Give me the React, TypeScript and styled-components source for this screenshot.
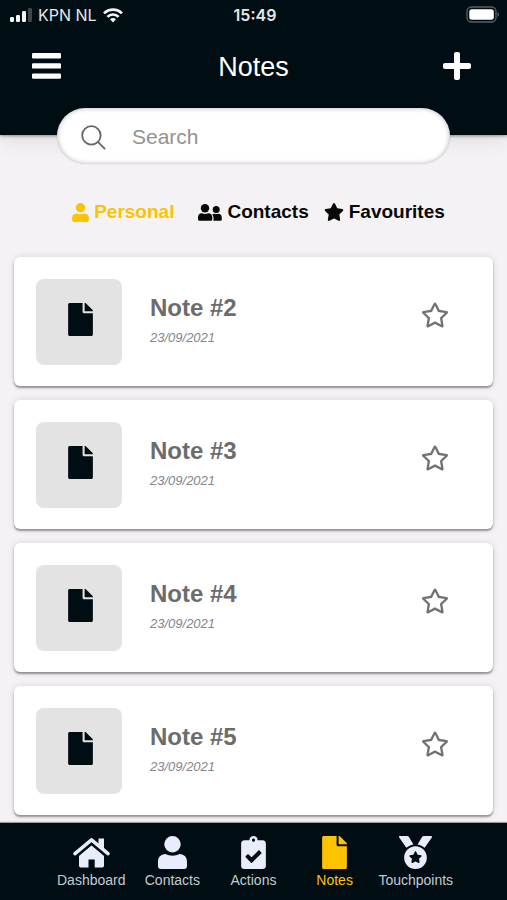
import React, { useState } from "react";
import styled, { createGlobalStyle, css } from "styled-components";
import { FaClipboardCheck, FaFile, FaMedal, FaPlus, FaRegStar, FaStar } from "react-icons/fa";

const color = {
  ink: "#000e14",
  page: "#f4f2f4",
  accent: "#fdc300",
  navIcon: "#e9edfb",
  navText: "#c3cbd0",
  grey: "#6c6c6c",
};

const GlobalStyle = createGlobalStyle`
  *, *::before, *::after { box-sizing: border-box; }
  body {
    margin: 0;
    background: ${color.page};
    font-family: "Liberation Sans", Arial, Helvetica, sans-serif;
  }
  svg { display: block; flex-shrink: 0; }
`;

const Page = styled.div`
  display: flex;
  flex-direction: column;
  min-height: 100vh;
`;

const Header = styled.header`
  height: 135px;
  background: ${color.ink};
  color: #fff;
  box-shadow: 0 1px 3px rgba(0, 0, 0, 0.4), 0 4px 20px rgba(0, 0, 0, 0.1);
`;

const StatusBar = styled.div`
  display: grid;
  grid-template-columns: 1fr auto 1fr;
  align-items: center;
  height: 30px;
  padding: 0 7px 0 10px;
  font: 400 16px/20px Inter, "Liberation Sans", sans-serif;
  color: #e4e8ea;
`;

const Carrier = styled.div`
  display: flex;
  align-items: center;
  gap: 6px;
`;

const Clock = styled.time`
  font-weight: 600;
`;

const Battery = styled.div`
  display: flex;
  justify-content: flex-end;
  padding-bottom: 2px;
`;

const TitleBar = styled.div`
  display: grid;
  grid-template-columns: 30px 1fr 30px;
  align-items: center;
  height: 72px;
  padding: 0 35px 0 31px;
`;

const Title = styled.h1`
  margin: 0;
  padding: 2px 0 0 4px;
  font-size: 27px;
  line-height: 32px;
  font-weight: 400;
  text-align: center;
`;

const plainButton = css`
  display: flex;
  align-items: center;
  justify-content: center;
  padding: 0;
  border: 0;
  background: none;
  color: inherit;
  font-family: inherit;
  cursor: pointer;
`;

const IconButton = styled.button`
  ${plainButton}
  height: 36px;
`;

const Main = styled.main`
  flex: 1;
  padding: 0 14px 8px;
`;

const SearchBox = styled.label`
  position: relative;
  display: flex;
  align-items: center;
  gap: 26px;
  height: 56px;
  margin: -27px 43px 0;
  padding: 2px 24px 0;
  border-radius: 28px;
  background: #fff;
  color: #666;
  box-shadow: inset 0 0 5px rgba(0, 0, 0, 0.3), 0 0 2px rgba(0, 0, 0, 0.1);
`;

const SearchInput = styled.input`
  flex: 1;
  min-width: 0;
  padding: 0;
  border: 0;
  outline: 0;
  background: none;
  color: #444;
  font: 400 21px/28px "Liberation Sans", Arial, sans-serif;
  &::placeholder {
    color: #929292;
    opacity: 1;
  }
`;

const Tabs = styled.div`
  display: flex;
  justify-content: center;
  margin: 34px 0 31px;
  padding-left: 10px;
`;

const Tab = styled.button<{ $active: boolean }>`
  ${plainButton}
  gap: 5px;
  height: 28px;
  color: ${(p) => (p.$active ? color.accent : "#080808")};
  font-size: 19px;
  line-height: 28px;
  font-weight: 700;
  & + & { margin-left: 15px; }
  &:first-child { margin-right: 9px; }
`;

const NoteList = styled.ul`
  display: grid;
  gap: 14px;
  margin: 0;
  padding: 0;
  list-style: none;
`;

const NoteCard = styled.li`
  display: flex;
  align-items: center;
  height: 129px;
  padding: 0 44px 0 22px;
  border-radius: 6px;
  background: #fff;
  box-shadow: 0 2px 2px rgba(0, 0, 0, 0.36), 0 0 7px rgba(0, 0, 0, 0.12);
`;

const Thumb = styled.div`
  display: grid;
  place-items: center;
  width: 86px;
  height: 86px;
  padding: 0 0 5px 3px;
  border-radius: 8px;
  background: #e3e3e3;
  color: ${color.ink};
`;

const NoteText = styled.div`
  flex: 1;
  height: 64px;
  margin-left: 28px;
`;

const NoteTitle = styled.h2`
  margin: 0;
  color: ${color.grey};
  font-size: 24px;
  line-height: 36px;
  font-weight: 700;
`;

const NoteDate = styled.time`
  display: block;
  color: #85858a;
  font-size: 13px;
  line-height: 24px;
  font-style: italic;
`;

const StarButton = styled.button`
  ${plainButton}
  height: 28px;
  margin-bottom: 14px;
  color: #727272;
`;

const BottomNav = styled.nav`
  position: sticky;
  bottom: 0;
  display: grid;
  grid-template-columns: repeat(5, 1fr);
  height: 77px;
  padding: 12px 10% 0;
  background: ${color.ink};
  box-shadow: 0 -1px 1px rgba(0, 0, 0, 0.35);
`;

const NavLink = styled.a<{ $active: boolean }>`
  display: flex;
  flex-direction: column;
  align-items: center;
  color: ${(p) => (p.$active ? color.accent : color.navText)};
  font-size: 14px;
  line-height: 20px;
  text-decoration: none;
  svg { color: ${(p) => (p.$active ? color.accent : color.navIcon)}; }
`;

const NavIcon = styled.span`
  display: flex;
  align-items: center;
  height: 35px;
`;

const SignalIcon = () => (
  <svg width="22" height="14" viewBox="0 0 22 14" fill="#f4f6f7" aria-hidden="true">
    <rect y="9" width="4" height="5" rx="1.2" />
    <rect x="6" y="7" width="4" height="7" rx="1.2" />
    <rect x="12" y="3" width="4" height="11" rx="1.2" />
    <rect x="18" y="0" width="4" height="14" rx="1.2" opacity=".25" />
  </svg>
);

const WifiIcon = () => (
  <svg width="20" height="15" viewBox="0 0 20 15" fill="none" stroke="#f4f6f7" strokeWidth="2.7" aria-hidden="true">
    <path d="M1 5.4C6 .4 14 .4 19 5.4" />
    <path d="M4.4 8.9c3.2-3.2 8-3.2 11.2 0" />
    <path d="M7 11.2c1.700-1.600 4.300-1.600 6 0L10 14.500z" fill="#f4f6f7" stroke="none" />
  </svg>
);

const BatteryIcon = () => (
  <svg width="34" height="17" viewBox="0 0 34 17" aria-hidden="true">
    <rect x="1" y="1" width="29" height="15" rx="4.5" fill="none" stroke="#566065" strokeWidth="1.3" />
    <rect x="3.3" y="3.2" width="24.5" height="10.6" rx="2.5" fill="#fff" />
    <path d="M31.5 6v5c2-.8 2-4.200 0-5z" fill="#566065" />
  </svg>
);

const MenuIcon = () => (
  <svg width="29" height="26" viewBox="0 0 29 26" fill="currentColor" aria-hidden="true">
    <rect width="29" height="5.400" rx="1.200" />
    <rect y="10.200" width="29" height="5.400" rx="1.200" />
    <rect y="20.400" width="29" height="5.400" rx="1.200" />
  </svg>
);

const SearchIcon = () => (
  <svg width="25" height="25" viewBox="0 0 25 25" fill="none" stroke="currentColor" strokeWidth="1.8" strokeLinecap="round" aria-hidden="true">
    <circle cx="10.400" cy="10.400" r="9.200" />
    <path d="M17.200 17.200L23.600 23.600" />
  </svg>
);

const UserIcon = ({ width, height }: { width: number; height: number }) => (
  <svg width={width} height={height} viewBox="0 0 29 33" fill="currentColor" aria-hidden="true">
    <circle cx="14.500" cy="8.300" r="8.200" />
    <path d="M7.500 18.100C12 20.300 17 20.300 21.500 18.100C26.500 18.300 29 21.500 29 26V30Q29 33 26 33H3Q0 33 0 30V26C0 21.500 2.500 18.300 7.500 18.100Z" />
  </svg>
);

const UsersIcon = () => (
  <svg width="24" height="17" viewBox="0 0 24 17" fill="currentColor" aria-hidden="true">
    <circle cx="7" cy="4.200" r="4.200" />
    <path d="M3.800 9.200C6 10.200 8 10.200 10.200 9.200C13 9.300 14.300 11 14.300 13.300V15.300Q14.300 16.800 12.800 16.800H1.500Q0 16.800 0 15.300V13.300C0 11 1.200 9.300 3.800 9.200Z" />
    <circle cx="18.200" cy="5.400" r="3.500" />
    <path d="M14.200 10.600C15 9.900 15.700 9.700 16.500 9.700C17.700 10.200 18.700 10.200 19.900 9.700C22.500 9.700 23.800 11.300 23.800 13.500V15.500Q23.800 16.800 22.500 16.800H15.400C15.800 14.500 15.700 12.300 14.200 10.600Z" />
  </svg>
);

const HomeIcon = () => (
  <svg width="37" height="31" viewBox="0 0 37 31" aria-hidden="true">
    <path d="M25.500 1.500H31V12L25.500 7Z" fill="currentColor" />
    <path d="M18.500 8.200L31 18.700V28.800Q31 30.500 29.300 30.500H21.700V22.500H15.500V30.500H7.700Q6 30.500 6 28.800V18.700Z" fill="currentColor" />
    <path d="M2 16.700L18.500 2.800L35 16.700" fill="none" stroke="currentColor" strokeWidth="3.500" strokeLinecap="round" strokeLinejoin="round" />
    <path d="M4.500 18.800L18.500 7L32.500 18.800" fill="none" stroke={color.ink} strokeWidth="1.700" />
  </svg>
);

const tabs = [
  { label: "Personal", icon: <UserIcon width={17} height={19} /> },
  { label: "Contacts", icon: <UsersIcon /> },
  { label: "Favourites", icon: <FaStar size={20} /> },
];

const notes = ["Note #2", "Note #3", "Note #4", "Note #5"];

const navItems = [
  { label: "Dashboard", icon: <HomeIcon /> },
  { label: "Contacts", icon: <UserIcon width={29} height={33} /> },
  { label: "Actions", icon: <FaClipboardCheck size={33} /> },
  { label: "Notes", icon: <FaFile size={33} /> },
  { label: "Touchpoints", icon: <FaMedal size={33} /> },
];

export default function App() {
  const [tab, setTab] = useState("Personal");
  const [starred, setStarred] = useState<string[]>([]);
  const toggleStar = (note: string) =>
    setStarred((s) => (s.includes(note) ? s.filter((n) => n !== note) : [...s, note]));

  return (
    <Page>
      <GlobalStyle />
      <Header>
        <StatusBar>
          <Carrier>
            <SignalIcon />
            <span>KPN NL</span>
            <WifiIcon />
          </Carrier>
          <Clock>15:49</Clock>
          <Battery>
            <BatteryIcon />
          </Battery>
        </StatusBar>
        <TitleBar>
          <IconButton aria-label="Menu">
            <MenuIcon />
          </IconButton>
          <Title>Notes</Title>
          <IconButton aria-label="Add note">
            <FaPlus size={32} />
          </IconButton>
        </TitleBar>
      </Header>
      <Main>
        <SearchBox>
          <SearchIcon />
          <SearchInput type="search" placeholder="Search" aria-label="Search" />
        </SearchBox>
        <Tabs role="tablist">
          {tabs.map((t) => (
            <Tab
              key={t.label}
              role="tab"
              aria-selected={tab === t.label}
              $active={tab === t.label}
              onClick={() => setTab(t.label)}
            >
              {t.icon}
              {t.label}
            </Tab>
          ))}
        </Tabs>
        <NoteList>
          {notes.map((note) => (
            <NoteCard key={note}>
              <Thumb>
                <FaFile size={33} />
              </Thumb>
              <NoteText>
                <NoteTitle>{note}</NoteTitle>
                <NoteDate dateTime="2021-09-23">23/09/2021</NoteDate>
              </NoteText>
              <StarButton
                aria-label={`Favourite ${note}`}
                aria-pressed={starred.includes(note)}
                onClick={() => toggleStar(note)}
              >
                {starred.includes(note) ? <FaStar size={28} /> : <FaRegStar size={28} />}
              </StarButton>
            </NoteCard>
          ))}
        </NoteList>
      </Main>
      <BottomNav aria-label="Main">
        {navItems.map((item) => (
          <NavLink
            key={item.label}
            href={`#${item.label.toLowerCase()}`}
            $active={item.label === "Notes"}
            aria-current={item.label === "Notes" ? "page" : undefined}
          >
            <NavIcon>{item.icon}</NavIcon>
            {item.label}
          </NavLink>
        ))}
      </BottomNav>
    </Page>
  );
}
